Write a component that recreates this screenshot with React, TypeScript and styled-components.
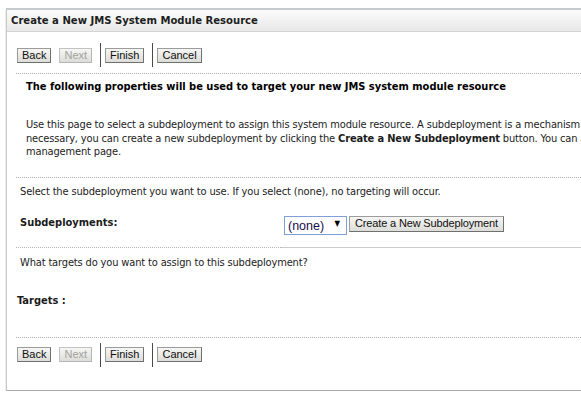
import styled, { createGlobalStyle } from 'styled-components'

const GlobalStyle = createGlobalStyle`
  body {
    margin: 0;
    background: #ffffff;
    overflow: hidden;
    font-family: "DejaVu Sans Condensed", "DejaVu Sans", sans-serif;
    font-stretch: condensed;
    color: #1c1c1c;
  }
`

const Panel = styled.div`
  margin: 8px 0 0 6px;
  width: 760px;
  height: 380px;
  background: #ffffff;
  border-top: 2px solid #c3cbcf;
  border-left: 1px solid #c6cacc;
  border-bottom: 1px solid #a8a8a8;
  box-shadow: 0 2px 1px #8f8f8f;
`

const Header = styled.div`
  height: 21px;
  padding-left: 4px;
  display: flex;
  align-items: center;
  background: linear-gradient(#fbfbfb, #e7e8e7);
  border-bottom: 1px solid #d2d5d2;
  font-size: 11.2px;
  font-weight: bold;
  color: #1e1e1e;
`

const Content = styled.div`
  padding-left: 9px;
`

const ButtonBar = styled.div<{ $top: number }>`
  margin-top: ${p => p.$top}px;
  height: 24px;
  padding-left: 1px;
  display: flex;
  align-items: center;
`

const Button = styled.button<{ $disabled?: boolean }>`
  height: 15px;
  margin: 0 8px 0 0;
  padding: 0 4px;
  font-family: "Liberation Sans", Arial, sans-serif;
  font-size: 11px;
  line-height: 13px;
  color: ${p => (p.$disabled ? '#a2a2a2' : '#101010')};
  background: linear-gradient(#f6f6f4, #dcdcd8);
  border: 1px solid ${p => (p.$disabled ? '#c2c2c2' : '#9c9c9c')};
  border-right-color: ${p => (p.$disabled ? '#b6b6b6' : '#707070')};
  border-bottom-color: ${p => (p.$disabled ? '#b6b6b6' : '#707070')};
  border-radius: 0;
`

const Divider = styled.span`
  width: 1px;
  height: 24px;
  margin-right: 4px;
  background: #4a4a4a;
`

const Rule = styled.div<{ $top: number }>`
  margin-top: ${p => p.$top}px;
  border-top: 1px dotted #b4b4b4;
`

const Heading = styled.div`
  margin-top: 6px;
  padding-left: 10px;
  font-size: 11px;
  font-weight: bold;
  line-height: 14px;
  color: #000;
`

const Intro = styled.div`
  margin-top: 24px;
  padding-left: 10px;
  font-size: 11px;
  letter-spacing: -0.15px;
  line-height: 13.5px;
  white-space: nowrap;
`

const Text = styled.div<{ $top: number; $left: number; $bold?: boolean }>`
  margin-top: ${p => p.$top}px;
  padding-left: ${p => p.$left}px;
  font-size: 11px;
  line-height: 14px;
  letter-spacing: ${p => (p.$bold ? '0' : '-0.15px')};
  font-weight: ${p => (p.$bold ? 'bold' : 'normal')};
  white-space: nowrap;
`

const FieldRow = styled.div`
  margin-top: 16px;
  display: flex;
`

const LabelCell = styled.div`
  width: 261px;
  padding: 1px 0 0 4px;
  border-bottom: 1px dotted #b4b4b4;
  font-size: 11px;
  line-height: 14px;
  font-weight: bold;
`

const ControlCell = styled.div`
  flex: 1;
  padding: 0 0 13px 3px;
  display: flex;
  align-items: flex-start;
  gap: 2px;
  border-bottom: 1px solid #cbcbcb;
`

const SelectBox = styled.div`
  position: relative;
  width: 63px;
  height: 19px;
`

const Select = styled.select`
  appearance: none;
  box-sizing: border-box;
  width: 63px;
  height: 19px;
  margin: 0;
  padding: 0 0 0 3px;
  font-family: "Liberation Sans", Arial, sans-serif;
  font-size: 12.5px;
  color: #1a0e4a;
  background: #fff;
  border: 1px solid #7f9fd6;
  border-radius: 0;
  outline: none;
`

const Arrow = styled.span`
  position: absolute;
  right: 7px;
  top: 3px;
  font-family: "DejaVu Sans", sans-serif;
  font-size: 8px;
  line-height: 12px;
  color: #000;
  pointer-events: none;
`

const CreateButton = styled(Button)`
  margin: 1px 0 0;
  height: 16px;
  padding: 0 5px;
  letter-spacing: -0.15px;
`

const WizardButtons = ({ top }: { top: number }) => (
  <ButtonBar $top={top}>
    <Button>Back</Button>
    <Button $disabled>Next</Button>
    <Divider />
    <Button>Finish</Button>
    <Divider />
    <Button>Cancel</Button>
  </ButtonBar>
)

export default function App() {
  return (
    <>
      <GlobalStyle />
      <Panel>
        <Header>Create a New JMS System Module Resource</Header>
        <Content>
          <WizardButtons top={11} />
          <Rule $top={6} />
          <Heading>The following properties will be used to target your new JMS system module resource</Heading>
          <Intro>
            Use this page to select a subdeployment to assign this system module resource. A subdeployment is a mechanism by which JMS module resources are grouped and targeted. If
            <br />
            necessary, you can create a new subdeployment by clicking the <b>Create a New Subdeployment</b> button. You can also create subdeployments from the module's subdeployment
            <br />
            management page.
          </Intro>
          <Rule $top={18} />
          <Text $top={7} $left={4}>
            Select the subdeployment you want to use. If you select (none), no targeting will occur.
          </Text>
          <FieldRow>
            <LabelCell>Subdeployments:</LabelCell>
            <ControlCell>
              <SelectBox>
                <Select defaultValue="none">
                  <option value="none">(none)</option>
                </Select>
                <Arrow>▼</Arrow>
              </SelectBox>
              <CreateButton>Create a New Subdeployment</CreateButton>
            </ControlCell>
          </FieldRow>
          <Text $top={8} $left={4}>What targets do you want to assign to this subdeployment?</Text>
          <Text $top={24} $left={1} $bold>Targets :</Text>
          <Rule $top={29} />
          <WizardButtons top={5} />
        </Content>
      </Panel>
    </>
  )
}
